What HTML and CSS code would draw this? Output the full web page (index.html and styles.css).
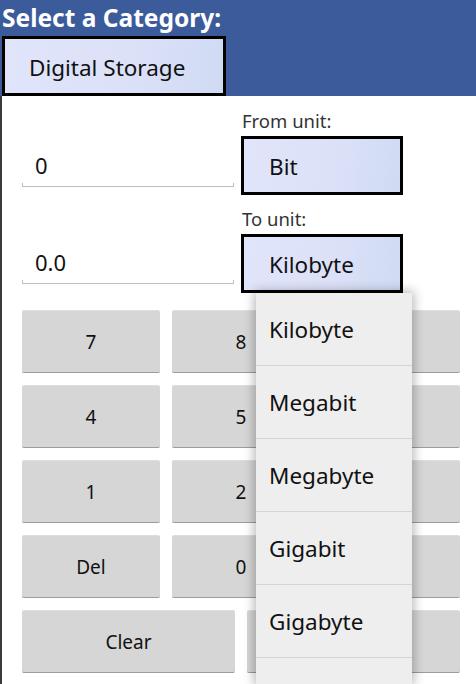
FILE: index.html
```html
<!DOCTYPE html>
<html>
<head>
<meta charset="utf-8">
<link rel="stylesheet" href="styles.css">
</head>
<body>
<div class="header">
  <div class="title">Select a Category:</div>
  <div class="spin cat">Digital Storage</div>
</div>
<div class="main">
  <div class="conv">
    <div class="row">
      <div class="field"><span class="val">0</span></div>
      <div class="unit">
        <div class="lbl">From unit:</div>
        <div class="spin box">Bit</div>
      </div>
    </div>
    <div class="row second">
      <div class="field"><span class="val">0.0</span></div>
      <div class="unit">
        <div class="lbl">To unit:</div>
        <div class="spin box">Kilobyte</div>
      </div>
    </div>
  </div>
  <div class="keypad">
    <div class="keys3">
      <div class="key">7</div><div class="key">8</div><div class="key">9</div>
      <div class="key">4</div><div class="key">5</div><div class="key">6</div>
      <div class="key">1</div><div class="key">2</div><div class="key">3</div>
      <div class="key">Del</div><div class="key">0</div><div class="key">.</div>
    </div>
    <div class="keys2">
      <div class="key">Clear</div><div class="key"></div>
    </div>
  </div>
</div>
<div class="dropdown">
  <div class="item">Kilobyte</div>
  <div class="item">Megabit</div>
  <div class="item">Megabyte</div>
  <div class="item">Gigabit</div>
  <div class="item">Gigabyte</div>
</div>
</body>
</html>
```
FILE: styles.css
```css
html, body {
  margin: 0;
  padding: 0;
  background: #ffffff;
  width: 476px;
  height: 684px;
  overflow: hidden;
  font-family: "Noto Sans", "Open Sans", sans-serif;
}
body {
  position: relative;
}
.header {
  background: #3b5b9b;
  height: 96px;
  display: flex;
  flex-direction: column;
}
.title {
  color: #ffffff;
  font-weight: bold;
  font-size: 24.5px;
  line-height: 36px;
  height: 36px;
  padding-left: 2px;
  white-space: nowrap;
}
.spin {
  box-sizing: border-box;
  border: 3px solid #000;
  background: linear-gradient(100deg, #e1e5fc 0%, #dce1f8 55%, #cfdbf3 100%);
  color: #111;
  font-size: 22.5px;
  display: flex;
  align-items: center;
  padding-top: 2px;
}
.cat {
  margin-left: 2px;
  width: 224px;
  height: 60px;
  padding-left: 24px;
}
.main {
  border-left: 2px solid #3a3a3a;
  height: 588px;
  box-sizing: border-box;
  padding-left: 20px;
}
.conv {
  padding-top: 14px;
  display: flex;
  flex-direction: column;
  gap: 13px;
}
.row {
  display: grid;
  grid-template-columns: 212px 162px;
  column-gap: 7px;
}
.field {
  align-self: end;
  margin-bottom: 8px;
  height: 42px;
  position: relative;
  border-bottom: 1px solid #bdbdbd;
  display: flex;
  align-items: center;
  padding-left: 13px;
  font-size: 22px;
  color: #111;
}
.field::before, .field::after {
  content: "";
  position: absolute;
  bottom: 0;
  width: 1px;
  height: 3px;
  background: #bdbdbd;
}
.field::before { left: 0; }
.field::after { right: 0; }
.second .field { margin-bottom: 9px; }
.lbl {
  font-size: 18.5px;
  line-height: 22px;
  color: #333;
  margin-bottom: 4px;
  padding-left: 1px;
}
.box {
  height: 59px;
  padding-left: 25px;
}
.keypad {
  margin-top: 17px;
  width: 438px;
  display: flex;
  flex-direction: column;
  gap: 12px;
}
.keys3 {
  display: grid;
  grid-template-columns: repeat(3, 138px);
  grid-auto-rows: 63px;
  gap: 12px;
}
.keys2 {
  display: grid;
  grid-template-columns: repeat(2, 213px);
  grid-auto-rows: 63px;
  gap: 12px;
}
.key {
  box-sizing: border-box;
  background: #d6d6d6;
  border-radius: 2px;
  border-top: 1px solid #dedede;
  border-bottom: 1px solid #9c9c9c;
  display: flex;
  align-items: center;
  justify-content: center;
  font-size: 19px;
  color: #111;
}
.dropdown {
  position: absolute;
  left: 256px;
  top: 293px;
  width: 156px;
  height: 391px;
  background: #eeeeee;
  box-shadow: 0 0 10px 2px rgba(0,0,0,0.28);
}
.item {
  height: 72px;
  border-bottom: 1px solid #d4d4d4;
  display: flex;
  align-items: center;
  padding-left: 13px;
  font-size: 22.5px;
  color: #111;
}
```
